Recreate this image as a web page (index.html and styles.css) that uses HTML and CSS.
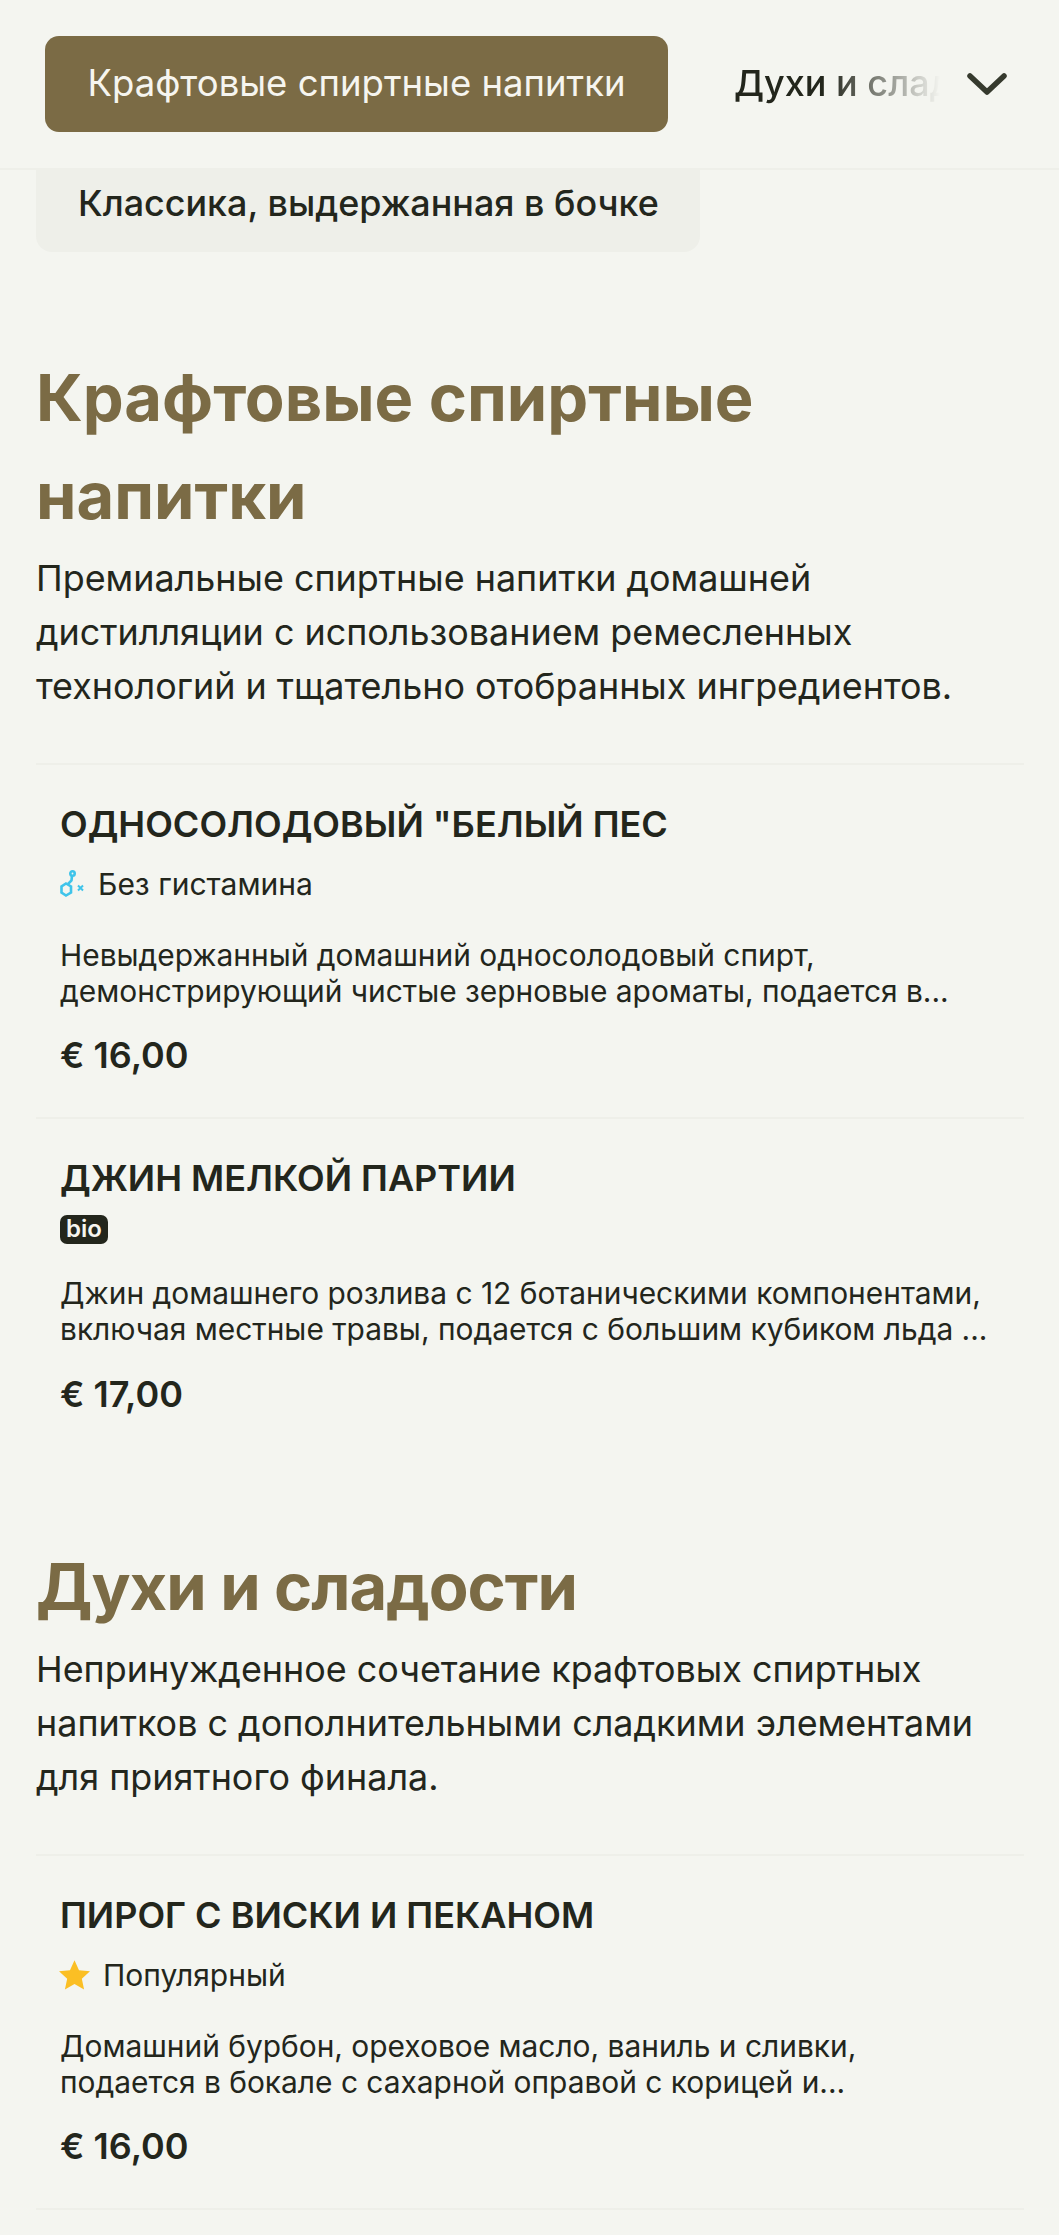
FILE: index.html
```html
<!DOCTYPE html>
<html lang="ru">
<head>
    <meta charset="UTF-8">
    <title>Меню</title>
    <link rel="stylesheet" href="styles.css">
</head>
<body>

<div class="topBar">
    <div class="tabActive">Крафтовые спиртные напитки</div>
    <div class="tabNext">Духи и сладости</div>
    <svg class="chevron" width="40" height="22" viewBox="0 0 40 22">
        <path d="M3 3 L20 19 L37 3" fill="none" stroke="#363a2e" stroke-width="5.5" stroke-linecap="round" stroke-linejoin="round"/>
    </svg>
</div>

<div class="content">

    <div class="chip">Классика, выдержанная в бочке</div>

    <div class="section">
        <h2 class="sectionTitle">Крафтовые спиртные напитки</h2>
        <p class="sectionText">Премиальные спиртные напитки домашней дистилляции с использованием ремесленных технологий и тщательно отобранных ингредиентов.</p>

        <ul class="dishList">
            <li>
                <div class="dishName">ОДНОСОЛОДОВЫЙ "БЕЛЫЙ ПЕС</div>
                <div class="dishTag">
                    <svg class="tagIcon" width="26" height="28" viewBox="0 0 26 28">
                        <g fill="none" stroke="#3fc4ea" stroke-width="2.6">
                            <circle cx="12.5" cy="3.5" r="2.2"/>
                            <path d="M12 6 L11.5 10.5 L8 14"/>
                            <path d="M6 13.5 L11 16.5 L11 22.5 L6 25.5 L1.5 22.5 L1.5 16.5 Z"/>
                        </g>
                        <path d="M18 15.5 L23 20.5 M23 15.5 L18 20.5" stroke="#3fc4ea" stroke-width="2" fill="none"/>
                    </svg>
                    Без гистамина
                </div>
                <p class="dishText">Невыдержанный домашний односолодовый спирт, демонстрирующий чистые зерновые ароматы, подается в...</p>
                <div class="dishPrice">€ 16,00</div>
            </li>
            <li>
                <div class="dishName">ДЖИН МЕЛКОЙ ПАРТИИ</div>
                <div class="dishTag dishTagBio"><span class="bio">bio</span></div>
                <p class="dishText">Джин домашнего розлива с 12 ботаническими компонентами, включая местные травы, подается с большим кубиком льда ...</p>
                <div class="dishPrice">€ 17,00</div>
            </li>
        </ul>
    </div>

    <div class="section section2">
        <h2 class="sectionTitle">Духи и сладости</h2>
        <p class="sectionText">Непринужденное сочетание крафтовых спиртных напитков с дополнительными сладкими элементами для приятного финала.</p>

        <ul class="dishList">
            <li class="dishLast">
                <div class="dishName">ПИРОГ С ВИСКИ И ПЕКАНОМ</div>
                <div class="dishTag dishTagStar">
                    <svg class="tagIcon" width="31" height="30" viewBox="1 1.5 22 21">
                        <path d="M12 1.5 L15.2 8.6 L23 9.4 L17.2 14.6 L18.8 22.3 L12 18.4 L5.2 22.3 L6.8 14.6 L1 9.4 L8.8 8.6 Z" fill="#fbbf24"/>
                    </svg>
                    Популярный
                </div>
                <p class="dishText">Домашний бурбон, ореховое масло, ваниль и сливки, подается в бокале с сахарной оправой с корицей и...</p>
                <div class="dishPrice">€ 16,00</div>
            </li>
        </ul>
    </div>

</div>

</body>
</html>
```

FILE: styles.css
```css
* {
    padding: 0;
    margin: 0;
    list-style: none;
    box-sizing: border-box;
}

body {
    font-family: "Inter", "Liberation Sans", sans-serif;
    background: #f4f5f0;
    color: #23261c;
    overflow: hidden;
}

.topBar {
    height: 170px;
    padding: 36px 0 0 45px;
    display: flex;
    align-items: flex-start;
    border-bottom: 2px solid #eeefe9;
}

.tabActive {
    width: 623px;
    height: 96px;
    line-height: 94px;
    text-align: center;
    font-size: 36.5px;
    color: #f6f5ef;
    background: #7b6b45;
    border-radius: 14px;
    flex-shrink: 0;
}

.tabNext {
    width: 206px;
    margin-left: 66px;
    height: 96px;
    line-height: 94px;
    font-size: 36px;
    font-weight: 500;
    white-space: nowrap;
    overflow: hidden;
    -webkit-mask-image: linear-gradient(to right, #000 45%, transparent 100%);
    mask-image: linear-gradient(to right, #000 45%, transparent 100%);
}

.chevron {
    margin: 37px 0 0 27px;
    flex-shrink: 0;
}

.content {
    padding: 0 35px 0 36px;
}

.chip {
    width: 664px;
    height: 82px;
    line-height: 66px;
    padding-left: 42px;
    font-size: 35.9px;
    font-weight: 500;
    background: #eeefe9;
    border-radius: 0 0 16px 16px;
}

.section {
    margin-top: 97px;
}

.section2 {
    margin-top: 81px;
}

.section2 .sectionTitle {
    letter-spacing: -1px;
}

.sectionTitle {
    font-size: 65px;
    line-height: 98px;
    font-weight: 700;
    color: #7b6b45;
}

.sectionText {
    font-size: 35.9px;
    line-height: 54px;
    margin-top: 6px;
}

.dishList {
    margin-top: 50px;
}

.dishList li {
    padding: 35px 24px 0;
    height: 354px;
    border-top: 2px solid #eeefe9;
}

.dishList li:nth-child(2) {
    height: 340px;
}

.dishList li:nth-child(2) .dishPrice {
    margin-top: 23px;
}

.dishList li.dishLast {
    height: 356px;
    border-bottom: 2px solid #eeefe9;
}

.dishName {
    font-size: 36px;
    line-height: 48px;
    font-weight: 600;
}

.dishTag {
    display: flex;
    align-items: center;
    gap: 12px;
    height: 44px;
    margin-top: 14px;
    font-size: 30px;
}

.dishTagStar {
    gap: 13px;
    margin-left: -1px;
}

.dishTagBio {
    height: 30px;
    margin: 12px 0 1px;
}

.bio {
    display: block;
    width: 48px;
    height: 29px;
    line-height: 27px;
    text-align: center;
    font-size: 24px;
    font-weight: 600;
    color: #f6f5ef;
    background: #23261c;
    border-radius: 7px;
}

.dishText {
    font-size: 29.9px;
    line-height: 36px;
    margin-top: 31px;
}

.dishPrice {
    font-size: 36px;
    line-height: 48px;
    font-weight: 600;
    margin-top: 22px;
}
```
